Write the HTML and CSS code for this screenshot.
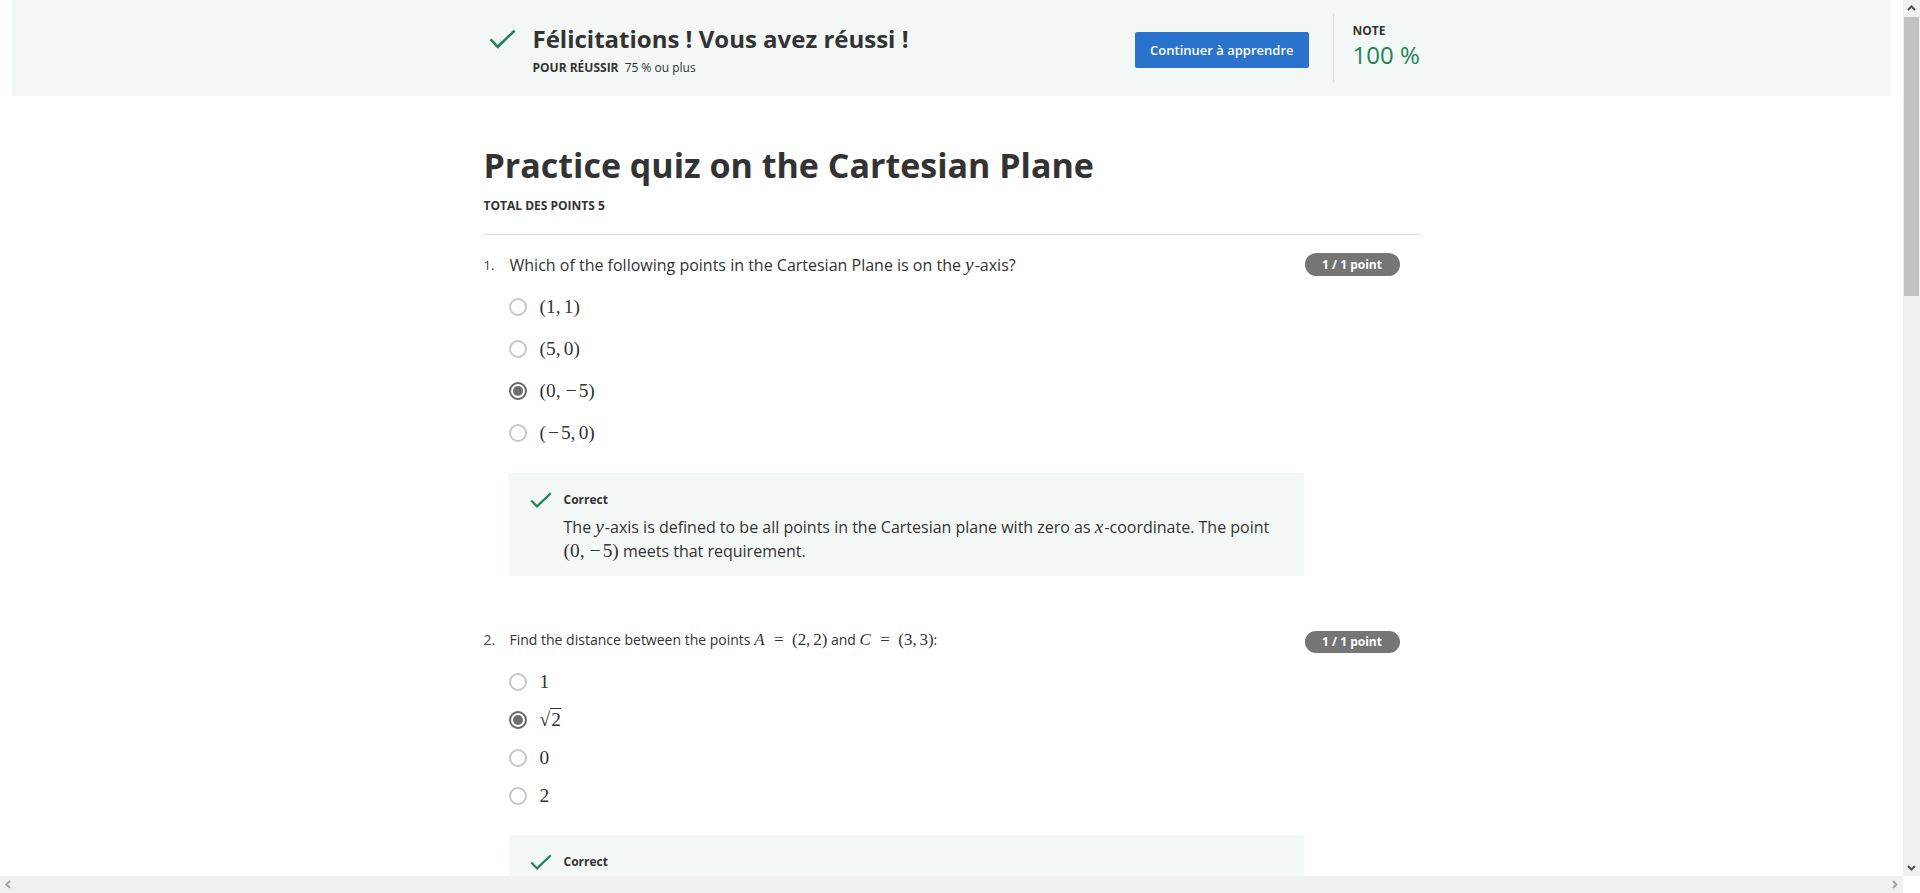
FILE: index.html
```html
<!DOCTYPE html>
<html lang="fr">
<head>
<meta charset="utf-8">
<title>Practice quiz on the Cartesian Plane</title>
<link rel="stylesheet" href="styles.css">
</head>
<body class="window">
<div class="viewport">
<div class="page">
  <header class="banner">
    <div class="banner-inner">
      <div class="result">
        <svg class="result-check" width="27" height="20" viewBox="0 0 27 20" aria-hidden="true"><path d="M1.6 10.4 L8.8 17.8 L25.6 1.6" fill="none" stroke="#1f8354" stroke-width="2.6"/></svg>
        <div class="result-text">
          <h2 class="result-title">Félicitations ! Vous avez réussi !</h2>
          <div class="result-sub"><strong>POUR RÉUSSIR</strong> 75 % ou plus</div>
        </div>
      </div>
      <button class="btn-continue" type="button">Continuer à apprendre</button>
      <div class="grade">
        <div class="grade-label">NOTE</div>
        <div class="grade-value">100 %</div>
      </div>
    </div>
  </header>

  <main class="quiz">
    <h1 class="quiz-title">Practice quiz on the Cartesian Plane</h1>
    <div class="quiz-points">TOTAL DES POINTS 5</div>
    <hr class="quiz-rule">

    <section class="question question--large">
      <div class="q-head">
        <span class="q-num">1.</span>
        <div class="q-text">Which of the following points in the Cartesian Plane is on the <span class="math"><i>y</i></span>-axis?</div>
        <span class="q-badge">1 / 1 point</span>
      </div>
      <ul class="options">
        <li class="option"><span class="radio"></span><span class="math">(1,&#8202;&#8202;1)</span></li>
        <li class="option"><span class="radio"></span><span class="math">(5,&#8202;&#8202;0)</span></li>
        <li class="option"><span class="radio radio--checked"></span><span class="math">(0,&#8202;&#8202;<span class="minus">−</span>5)</span></li>
        <li class="option"><span class="radio"></span><span class="math">(<span class="minus">−</span>5,&#8202;&#8202;0)</span></li>
      </ul>
      <div class="feedback">
        <svg class="fb-check" width="22" height="16" viewBox="0 0 22 16" aria-hidden="true"><path d="M1.2 8.4 L7 14.4 L20.8 1.2" fill="none" stroke="#1f8354" stroke-width="2.2"/></svg>
        <div class="fb-body">
          <div class="fb-label">Correct</div>
          <p class="fb-text">The <span class="math"><i>y</i></span>-axis is defined to be all points in the Cartesian plane with zero as <span class="math"><i>x</i></span>-coordinate. The point <span class="math">(0,&#8202;&#8202;<span class="minus">−</span>5)</span> meets that requirement.</p>
        </div>
      </div>
    </section>

    <section class="question question--small">
      <div class="q-head">
        <span class="q-num">2.</span>
        <div class="q-text">Find the distance between the points <span class="math"><i>A</i><span class="rel">=</span>(2,&#8202;&#8202;2)</span> and <span class="math"><i>C</i><span class="rel">=</span>(3,&#8202;&#8202;3)</span>:</div>
        <span class="q-badge">1 / 1 point</span>
      </div>
      <ul class="options">
        <li class="option"><span class="radio"></span><span class="math">1</span></li>
        <li class="option"><span class="radio radio--checked"></span><span class="math">√<span class="sqrt">2</span></span></li>
        <li class="option"><span class="radio"></span><span class="math">0</span></li>
        <li class="option"><span class="radio"></span><span class="math">2</span></li>
      </ul>
      <div class="feedback">
        <svg class="fb-check" width="22" height="16" viewBox="0 0 22 16" aria-hidden="true"><path d="M1.2 8.4 L7 14.4 L20.8 1.2" fill="none" stroke="#1f8354" stroke-width="2.2"/></svg>
        <div class="fb-body">
          <div class="fb-label">Correct</div>
          <p class="fb-text">The distance is <span class="math">√<span class="sqrt">(3 <span class="minus">−</span> 2)² + (3 <span class="minus">−</span> 2)²</span><span class="rel">=</span>√<span class="sqrt">2</span></span>.</p>
        </div>
      </div>
    </section>
  </main>
</div>
</div>

<div class="vscroll" aria-hidden="true">
  <span class="sb-btn"><svg width="17" height="17" viewBox="0 0 17 17"><polyline points="5,10 8.5,6.5 12,10" fill="none" stroke="#505050" stroke-width="2"/></svg></span>
  <span class="sb-thumb"></span>
  <span class="sb-track"></span>
  <span class="sb-btn"><svg width="17" height="17" viewBox="0 0 17 17"><polyline points="5,7 8.5,10.5 12,7" fill="none" stroke="#505050" stroke-width="2"/></svg></span>
</div>
<div class="hscroll" aria-hidden="true">
  <span class="sb-btn"><svg width="17" height="17" viewBox="0 0 17 17"><polyline points="10,5 6.5,8.5 10,12" fill="none" stroke="#a3a3a3" stroke-width="2"/></svg></span>
  <span class="sb-track"></span>
  <span class="sb-btn"><svg width="17" height="17" viewBox="0 0 17 17"><polyline points="7,5 10.5,8.5 7,12" fill="none" stroke="#a3a3a3" stroke-width="2"/></svg></span>
</div>
<div class="sb-corner" aria-hidden="true"></div>
</body>
</html>
```

FILE: styles.css
```css
html,
body {
  height: 100%;
}

body {
  margin: 0;
  font-family: "Open Sans", "Noto Sans", sans-serif;
  color: #333;
  background: #fff;
}

/* ---------- browser frame with scrollbars ---------- */
.window {
  display: grid;
  grid-template-columns: 1fr 17px;
  grid-template-rows: 1fr 17px;
  height: 100vh;
  overflow: hidden;
}

.viewport {
  min-width: 0;
  min-height: 0;
  overflow: hidden;
}

.vscroll {
  display: flex;
  flex-direction: column;
  background: #f1f1f1;
}

.hscroll {
  display: flex;
  background: #f1f1f1;
}

.sb-btn {
  flex: none;
  width: 17px;
  height: 17px;
  display: block;
}

.sb-btn svg {
  display: block;
}

.sb-thumb {
  flex: none;
  height: 279px;
  margin: 0 1px 0 1px;
  background: #c1c1c1;
}

.sb-track {
  flex: 1;
}

.sb-corner {
  background: #fff;
}

.page {
  padding: 0 12px;
}

/* ---------- banner ---------- */
.banner {
  background: #f3f8f6;
}

.banner-inner {
  width: 936px;
  height: 68px;
  margin: 0 auto;
  padding: 14px 0;
  display: flex;
  align-items: center;
}

.result {
  flex: 1;
  display: flex;
  align-items: flex-start;
  align-self: flex-start;
  margin: 10px 0 0 5px;
}

.result-check {
  flex: none;
  margin: 5px 17px 0 0;
}

.result-title {
  margin: 0;
  font-size: 24px;
  line-height: 30px;
  font-weight: 700;
  color: #333;
}

.result-sub {
  margin-top: 5px;
  font-size: 12px;
  line-height: 18px;
  color: #333;
}

.result-sub strong {
  font-weight: 700;
  margin-right: 3px;
}

.btn-continue {
  flex: none;
  height: 36px;
  margin: 4px 24px 0 0;
  padding: 0 15px;
  border: 0;
  border-radius: 2px;
  background: #2a73cc;
  color: #fff;
  font-family: "Open Sans", sans-serif;
  font-size: 13px;
  font-weight: 600;
  line-height: 36px;
  white-space: nowrap;
}

.grade {
  flex: none;
  width: 87px;
  height: 68px;
  box-sizing: border-box;
  border-left: 1px solid #dcdcdc;
  padding: 8px 0 12px 19px;
  white-space: nowrap;
}

.grade-label {
  font-size: 12px;
  line-height: 18px;
  font-weight: 700;
  color: #333;
}

.grade-value {
  font-size: 24px;
  line-height: 30px;
  color: #1f8354;
}

/* ---------- quiz ---------- */
.quiz {
  width: 936px;
  margin: 0 auto;
  min-height: 2400px;
}

.quiz-title {
  margin: 47px 0 0;
  font-size: 34px;
  line-height: 44px;
  font-weight: 700;
  color: #333;
}

.quiz-points {
  margin-top: 10px;
  font-size: 12px;
  line-height: 18px;
  font-weight: 700;
}

.quiz-rule {
  margin: 19px 0 0;
  border: 0;
  border-top: 1px solid #e1e1e1;
  height: 0;
}

.question {
  padding-top: 18px;
}

.q-head {
  display: flex;
  align-items: flex-start;
}

.q-num {
  flex: none;
  width: 26px;
  color: #444;
}

.q-text {
  flex: 1;
  color: #333;
}

.question--large .q-num,
.question--large .q-text {
  font-size: 16px;
  line-height: 24px;
}

.question--large .q-num {
  font-size: 13px;
}

.question--small .q-num,
.question--small .q-text {
  font-size: 14px;
  line-height: 20px;
}

.q-badge {
  flex: none;
  width: 95px;
  height: 23px;
  margin-right: 20px;
  border-radius: 12px;
  background: #757575;
  color: #fff;
  text-align: center;
  font-size: 12px;
  line-height: 23px;
  font-weight: 700;
}

.question--small .q-badge {
  margin-top: 1px;
  height: 22px;
  line-height: 22px;
}

.options {
  list-style: none;
  margin: 9px 0 0;
  padding: 0;
}

.option {
  display: flex;
  align-items: center;
  height: 42px;
  padding-left: 25px;
}

.question--small .options {
  margin-top: 10px;
}

.question--small .option {
  height: 38px;
}

.radio {
  flex: none;
  position: relative;
  width: 18px;
  height: 18px;
  box-sizing: border-box;
  border: 2px solid #c6c6c6;
  border-radius: 50%;
  background: #fff;
  margin-right: 13px;
}

.radio--checked {
  border-color: #666;
}

.radio--checked::after {
  content: "";
  position: absolute;
  top: 2px;
  left: 2px;
  width: 10px;
  height: 10px;
  border-radius: 50%;
  background: #6f6f6f;
}

.math {
  font-family: "Liberation Serif", "DejaVu Serif", serif;
  font-size: 1.21em;
  line-height: 1;
  color: #333;
  white-space: nowrap;
}

.math i {
  font-style: italic;
  padding-right: 1px;
}

.minus {
  padding: 0 2px;
}

.rel {
  padding: 0 0.5em;
}

.sqrt {
  border-top: 1px solid #333;
  padding-left: 1px;
}

/* ---------- feedback ---------- */
.feedback {
  display: flex;
  align-items: flex-start;
  width: 795px;
  box-sizing: border-box;
  margin: 19px 0 36px 25px;
  padding: 18px 20px 13px 21px;
  background: #f3f8f6;
}

.question--small .feedback {
  margin-top: 20px;
}

.fb-check {
  flex: none;
  margin: 1px 12px 0 0;
}

.fb-body {
  flex: 1;
}

.fb-label {
  font-size: 12px;
  line-height: 18px;
  font-weight: 700;
  color: #333;
}

.fb-text {
  margin: 6px 0 0;
  font-size: 16px;
  line-height: 24px;
  color: #333;
}
```
